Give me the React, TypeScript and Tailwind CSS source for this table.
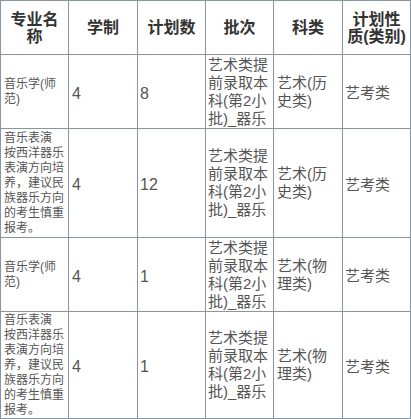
import React from 'react';

const rows = [
  { name: ['音乐学(师', '范)'], years: '4', plan: '8', subject: ['艺术(历', '史类)'] },
  {
    name: ['音乐表演', '按西洋器乐', '表演方向培', '养，建议民', '族器乐方向', '的考生慎重', '报考。'],
    years: '4',
    plan: '12',
    subject: ['艺术(历', '史类)'],
  },
  { name: ['音乐学(师', '范)'], years: '4', plan: '1', subject: ['艺术(物', '理类)'] },
  {
    name: ['音乐表演', '按西洋器乐', '表演方向培', '养，建议民', '族器乐方向', '的考生慎重', '报考。'],
    years: '4',
    plan: '1',
    subject: ['艺术(物', '理类)'],
  },
];

const heights = ['h-[74px]', 'h-[109px]', 'h-[74px]', 'h-[107px]'];
const batch = ['艺术类提', '前录取本', '科(第2小', '批)_器乐'];

function Lines({ lines }: { lines: string[] }) {
  return (
    <>
      {lines.map((l, i) => (
        <span key={i} className="block whitespace-nowrap">
          {l}
        </span>
      ))}
    </>
  );
}

export default function App() {
  const cell = 'border border-[#8796a0] align-middle';
  return (
    <div className="w-[411px] h-[419px] bg-white">
      <table
        className="table-fixed border-collapse w-[410px]"
        style={{ fontFamily: '"Liberation Sans", "Noto Sans CJK SC", sans-serif' }}
      >
        <colgroup>
          <col className="w-[68px]" />
          <col className="w-[69px]" />
          <col className="w-[68px]" />
          <col className="w-[68px]" />
          <col className="w-[69px]" />
          <col className="w-[68px]" />
        </colgroup>
        <thead>
          <tr className="h-[54px] text-[#333] font-bold text-[16px] leading-[17px]">
            <th className={`${cell} text-center`}>
              <Lines lines={['专业名', '称']} />
            </th>
            <th className={`${cell} text-center`}>学制</th>
            <th className={`${cell} text-center`}>计划数</th>
            <th className={`${cell} text-center`}>批次</th>
            <th className={`${cell} text-center`}>科类</th>
            <th className={`${cell} text-center`}>
              <Lines lines={['计划性', '质(类别)']} />
            </th>
          </tr>
        </thead>
        <tbody className="text-[#555]">
          {rows.map((r, i) => (
            <tr key={i} className={heights[i]}>
              <td className={`${cell} pl-[3px] text-[12px] leading-[15px]`}>
                <Lines lines={r.name} />
              </td>
              <td className={`${cell} pl-[3px] text-[16px] pt-[4px]`}>{r.years}</td>
              <td className={`${cell} pl-[2px] text-[16px] pt-[4px]`}>{r.plan}</td>
              <td className={`${cell} pl-[2px] text-[15px] leading-[18px]`}>
                <Lines lines={batch} />
              </td>
              <td className={`${cell} pl-[3px] text-[15px] leading-[18px]`}>
                <Lines lines={r.subject} />
              </td>
              <td className={`${cell} pl-[2px] text-[15px] pt-[4px]`}>艺考类</td>
            </tr>
          ))}
        </tbody>
      </table>
    </div>
  );
}
